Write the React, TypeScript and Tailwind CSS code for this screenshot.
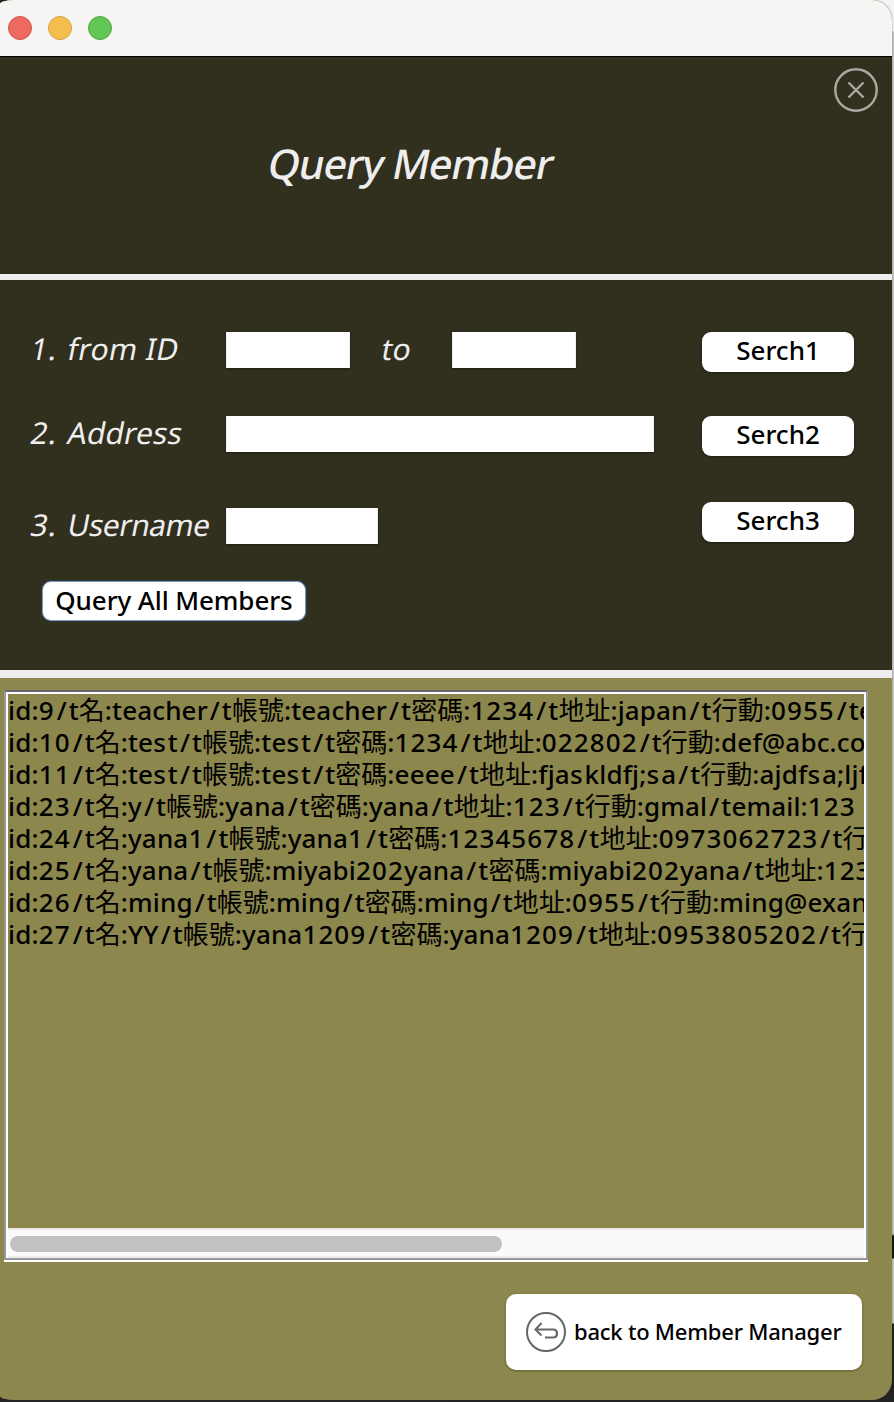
import type { ReactNode } from "react";

const rows = [
  "id:9/t名:teacher/t帳號:teacher/t密碼:1234/t地址:japan/t行動:0955/te",
  "id:10/t名:test/t帳號:test/t密碼:1234/t地址:022802/t行動:def@abc.co",
  "id:11/t名:test/t帳號:test/t密碼:eeee/t地址:fjaskldfj;sa/t行動:ajdfsa;ljf",
  "id:23/t名:y/t帳號:yana/t密碼:yana/t地址:123/t行動:gmal/temail:123",
  "id:24/t名:yana1/t帳號:yana1/t密碼:12345678/t地址:0973062723/t行",
  "id:25/t名:yana/t帳號:miyabi202yana/t密碼:miyabi202yana/t地址:123",
  "id:26/t名:ming/t帳號:ming/t密碼:ming/t地址:0955/t行動:ming@exan",
  "id:27/t名:YY/t帳號:yana1209/t密碼:yana1209/t地址:0953805202/t行",
];

// Slashes, digits and "s" are set wider than the letters around them;
// Chinese runs keep the regular weight.
function runClass(run: string) {
  if (run === "/") return "mx-[2px]";
  if (run === "s") return "tracking-[2px]";
  if (/^\d+$/.test(run)) return "tracking-[1.1px]";
  if (/^[^\x00-\x7f]+$/.test(run)) return "font-normal";
  return "tracking-[0.15px]";
}

function Row({ text }: { text: string }) {
  return (
    <div className="h-8 leading-8 whitespace-nowrap">
      {text.split(/(\/|s|\d+|[^\x00-\x7f]+)/).filter(Boolean).map((run, i) => (
        <span key={i} className={runClass(run)}>{run}</span>
      ))}
    </div>
  );
}

function Label({ no, children, className }: { no?: string; children: ReactNode; className: string }) {
  return (
    <span className={`flex h-9 shrink-0 text-[30px] leading-[34px] whitespace-nowrap text-[#eeeeee] ${className}`}>
      {no && <span className="w-[37px] shrink-0 -skew-x-[11deg] tracking-[1px]">{no}</span>}
      <span className="-skew-x-[11deg]">{children}</span>
    </span>
  );
}

function Field({ className }: { className: string }) {
  return <input className={`h-9 shrink-0 border-x border-x-[#ececec] bg-white shadow-[0_1px_2px_rgba(0,0,0,0.35)] outline-none ${className}`} />;
}

function SearchButton({ children }: { children: ReactNode }) {
  return (
    <button className="ml-auto h-10 w-[152px] rounded-[9px] bg-white pb-1 text-[26px] leading-9 font-medium text-black shadow-[0_1px_3px_rgba(0,0,0,0.4)]">
      {children}
    </button>
  );
}

export default function App() {
  return (
    <div className="h-[1402px] w-[894px] overflow-hidden bg-[linear-gradient(90deg,#262528_50%,transparent_50%),linear-gradient(#f4f4f4_0px,#f4f4f4_31px,#c8c8cb_32px,#c8c8cb_1234px,#151515_1236px,#151515_1258px,#c8c8cb_1259px,#c8c8cb_1323px,#232225_1324px)] font-['Noto_Sans','Noto_Sans_CJK_TC',sans-serif]">
      <div className="flex h-[1400px] w-[892px] flex-col overflow-hidden rounded-tl-[14px_4px] rounded-r-[20px] rounded-bl-[14px_4px] bg-[#8c874c] shadow-[0_0_2px_rgba(0,0,0,0.45)]">
        <header className="flex h-14 shrink-0 items-center gap-4 bg-[#f7f5f4] pl-2">
          <span className="size-6 rounded-full border border-[#d5544b] bg-[#ed6b60]" />
          <span className="size-6 rounded-full border border-[#d8a13c] bg-[#f5bf4f]" />
          <span className="size-6 rounded-full border border-[#4fa73e] bg-[#62c655]" />
        </header>

        <section className="h-[218px] shrink-0 border-t border-black bg-[#312f1e]">
          <div className="flex h-14 justify-end pt-[11px] pr-[14px]">
            <svg viewBox="0 0 44 44" className="size-11" fill="none" stroke="#aaa8a2">
              <circle cx="22" cy="22" r="20.7" strokeWidth="2.4" />
              <path d="M14.5 14.5 29.5 29.5M29.5 14.5 14.5 29.5" strokeWidth="2.4" />
            </svg>
          </div>
          <h1 className="w-fit -skew-x-[11deg] pt-[22px] pl-[271px] text-[41px] leading-[56px] font-medium tracking-[-1.1px] whitespace-nowrap text-[#eeeeee]">Query Member</h1>
        </section>

        <div className="h-1.5 shrink-0 bg-[#eeeeee]" />

        <section className="h-[390px] shrink-0 bg-[#312f1e] pr-[38px] pl-[31px]">
          <div className="flex pt-[52px]">
            <Label no="1." className="w-[195px] tracking-[0.4px]">from ID</Label>
            <Field className="w-[124px]" />
            <Label className="w-[102px] pl-8">to</Label>
            <Field className="w-[124px]" />
            <SearchButton>Serch1</SearchButton>
          </div>
          <div className="flex pt-11">
            <Label no="2." className="w-[195px] tracking-[0.15px]">Address</Label>
            <Field className="w-[428px]" />
            <SearchButton>Serch2</SearchButton>
          </div>
          <div className="flex items-end pt-[46px]">
            <Label no="3." className="w-[195px] tracking-[-0.5px]">Username</Label>
            <Field className="w-[152px]" />
            <div className="ml-auto pb-0.5">
              <SearchButton>Serch3</SearchButton>
            </div>
          </div>
          <button className="mt-[37px] ml-[11px] block h-10 w-[264px] rounded-[9px] border border-[#8496ad] bg-white pb-0.5 text-[26px] leading-9 font-medium tracking-[-0.1px] whitespace-nowrap text-black shadow-[0_0_0_1px_#29394a]">
            Query All Members
          </button>
        </section>

        <div className="h-2 shrink-0 bg-[#eeeeee]" />

        <main className="flex grow flex-col items-start pt-3 pl-1">
          <div className="h-[572px] w-[864px] border-b-2 border-b-white">
            <div className="h-[570px] border-2 border-[#98979b] border-t-[#67676b]">
              <div className="flex h-[566px] flex-col border-x-2 border-t-2 border-white">
                <div className="h-[534px] shrink-0 overflow-hidden text-[26px] font-medium text-black">
                  {rows.map((row) => (
                    <Row key={row} text={row} />
                  ))}
                </div>
                <div className="h-[30px] border-t-2 border-b-2 border-t-[#e8e8e8] border-b-[#ededed] bg-[#fafafa] pt-1.5 pl-0.5">
                  <div className="h-4 w-[492px] rounded-full bg-[#c1c1c1]" />
                </div>
              </div>
            </div>
          </div>
          <button className="mt-8 ml-[502px] flex h-[76px] w-[356px] items-center rounded-[10px] bg-white pl-5 text-[22px] font-medium tracking-[-0.22px] whitespace-nowrap text-black shadow-[0_1px_3px_rgba(0,0,0,0.3)]">
            <svg viewBox="0 0 40 40" className="size-10" fill="none" stroke="#666">
              <circle cx="20" cy="20" r="19" strokeWidth="2" />
              <path d="M10 17.5H27Q31 17.5 31 21.5T27 25.5H19" strokeWidth="2.2" />
              <path d="M15.5 11 9.5 17.5 15.5 23.5" strokeWidth="2" />
            </svg>
            <span className="pb-px pl-2">back to Member Manager</span>
          </button>
        </main>
      </div>
    </div>
  );
}
